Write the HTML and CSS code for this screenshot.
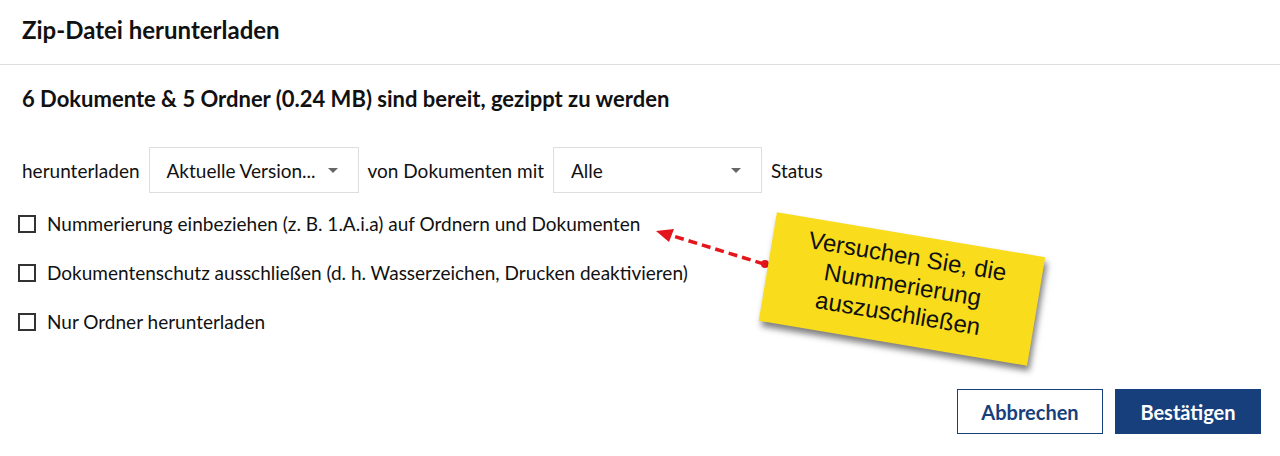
FILE: index.html
```html
<!DOCTYPE html>
<html>
  <head>
    <link rel="stylesheet" href="styles.css">
  </head>

  <body>
    <div class="dialog">
      <div class="dialogheader">Zip-Datei herunterladen</div>

      <div class="dialogbody">
        <div class="summary">6 Dokumente &amp; 5 Ordner (0.24 MB) sind bereit, gezippt zu werden</div>

        <div class="filterrow">
          <span>herunterladen</span>
          <div class="selectbox versionselect">
            <span>Aktuelle Version...</span>
            <span class="caret"></span>
          </div>
          <span>von Dokumenten mit</span>
          <div class="selectbox statusselect">
            <span>Alle</span>
            <span class="caret"></span>
          </div>
          <span>Status</span>
        </div>

        <label class="option"><span class="checkbox"></span>Nummerierung einbeziehen (z. B. 1.A.i.a) auf Ordnern und Dokumenten</label>
        <label class="option"><span class="checkbox"></span>Dokumentenschutz ausschließen (d. h. Wasserzeichen, Drucken deaktivieren)</label>
        <label class="option"><span class="checkbox"></span>Nur Ordner herunterladen</label>
      </div>

      <div class="dialogfooter">
        <button class="cancelbtn">Abbrechen</button>
        <button class="confirmbtn">Bestätigen</button>
      </div>
    </div>

    <svg class="arrow" width="130" height="50" viewBox="0 0 130 50">
      <line x1="112" y1="40" x2="18" y2="11" stroke="#e3161b" stroke-width="3.5" stroke-dasharray="9 5"/>
      <polygon points="4,7 22,5 17,18" fill="#e3161b"/>
      <circle cx="113" cy="40" r="4" fill="#e3161b"/>
    </svg>

    <div class="stickynote">Versuchen Sie, die<br>Nummerierung<br>auszuschließen</div>
  </body>
</html>
```

FILE: styles.css
```css
body {
  margin: 0;
  font-family: Lato, "Open Sans", sans-serif;
  color: #111;
  background-color: white;
}

.dialog {
  width: 1280px;
  height: 456px;
  display: flex;
  flex-direction: column;
}

.dialogheader {
  height: 65px;
  box-sizing: border-box;
  padding: 0 22px 6px 22px;
  display: flex;
  align-items: center;
  font-size: 24px;
  font-weight: 700;
  border-bottom: 1px solid #dedede;
}

.dialogbody {
  padding: 0 20px 0 18px;
  flex: 1;
}

.summary {
  font-size: 22px;
  font-weight: 700;
  padding: 20px 0 0 4px;
  height: 62px;
  box-sizing: border-box;
  margin-bottom: 20px;
}

.filterrow {
  display: flex;
  align-items: center;
  gap: 9px;
  font-size: 19px;
  padding-left: 4px;
}

.selectbox {
  height: 46px;
  box-sizing: border-box;
  border: 1px solid #dedede;
  display: flex;
  align-items: center;
  justify-content: space-between;
  padding: 0 20px 0 17px;
}

.versionselect {
  width: 210px;
}

.statusselect {
  width: 209px;
}

.caret {
  width: 0;
  height: 0;
  border-left: 5px solid transparent;
  border-right: 5px solid transparent;
  border-top: 5px solid #666;
}

.option {
  display: flex;
  align-items: center;
  gap: 11px;
  font-size: 19px;
  height: 49px;
}

.filterrow + .option {
  margin-top: 6px;
}

.checkbox {
  width: 14px;
  height: 14px;
  border: 2px solid #333;
  background-color: white;
}

.dialogfooter {
  display: flex;
  justify-content: flex-end;
  gap: 12px;
  padding: 0 19px 22px 0;
}

.cancelbtn,
.confirmbtn {
  width: 146px;
  height: 45px;
  font-family: Lato, sans-serif;
  font-size: 20px;
  font-weight: 700;
  border: 1px solid #173f7b;
}

.cancelbtn {
  background-color: white;
  color: #173f7b;
}

.confirmbtn {
  background-color: #173f7b;
  color: white;
}

.arrow {
  position: absolute;
  left: 652px;
  top: 224px;
}

.stickynote {
  position: absolute;
  left: 766px;
  top: 234px;
  width: 272px;
  height: 110px;
  box-sizing: border-box;
  padding-top: 7px;
  background-color: #f9dd1d;
  font-family: "Liberation Sans", Arial, sans-serif;
  font-size: 24px;
  line-height: 29px;
  text-align: center;
  transform: rotate(9.5deg);
  box-shadow: 3px 5px 6px rgba(0, 0, 0, 0.5);
}
```
